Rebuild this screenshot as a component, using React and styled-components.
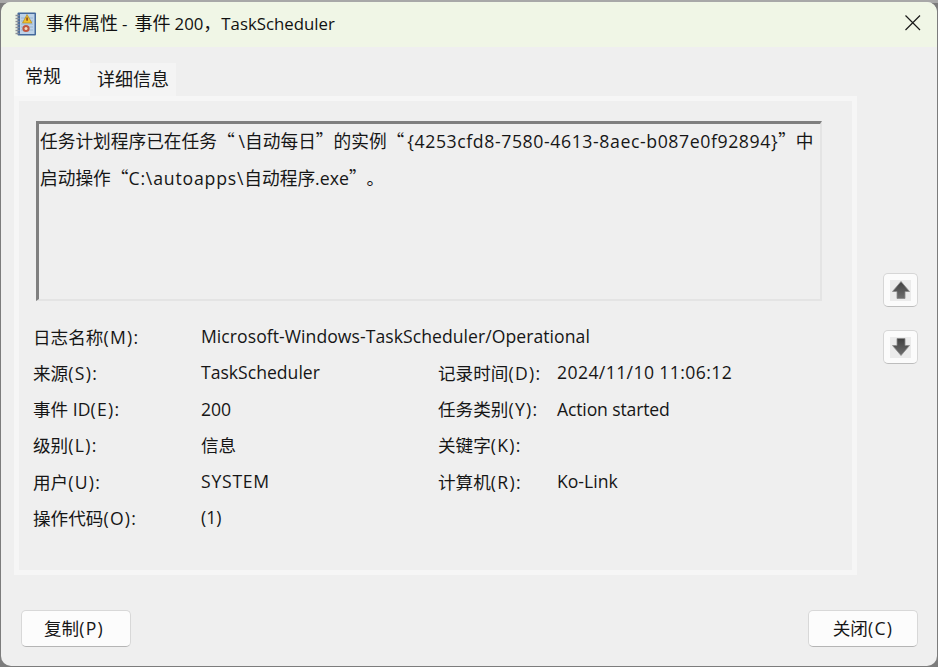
import React from "react";
import styled, { createGlobalStyle } from "styled-components";

const GlobalStyle = createGlobalStyle`
    html, body {
        margin: 0;
        padding: 0;
        width: 938px;
        height: 667px;
        overflow: hidden;
        background: #7c7c7c;
    }
    * {
        box-sizing: border-box;
    }
`;

const fields = [
    { label: "日志名称", hotkey: "(M):", value: "Microsoft-Windows-TaskScheduler/Operational", wide: true, track: "0.05px" },
    { label: "来源", hotkey: "(S):", value: "TaskScheduler", label2: "记录时间", hotkey2: "(D):", value2: "2024/11/10 11:06:12", track2: "0.4px" },
    { label: "事件 ID", hotkey: "(E):", value: "200", label2: "任务类别", hotkey2: "(Y):", value2: "Action started", track2: "-0.15px" },
    { label: "级别", hotkey: "(L):", value: "信息", label2: "关键字", hotkey2: "(K):", value2: "" },
    { label: "用户", hotkey: "(U):", value: "SYSTEM", track: "0.75px", label2: "计算机", hotkey2: "(R):", value2: "Ko-Link" },
    { label: "操作代码", hotkey: "(O):", value: "(1)" },
];

function NotebookIcon() {
    return (
        <svg width="24" height="26" viewBox="0 0 24 26">
            <rect x="3.5" y="1.5" width="18.5" height="23" rx="1" fill="#44699c" />
            <rect x="6" y="3" width="14.5" height="20" fill="#bcd2e8" />
            <path d="M7 7h12M7 10h12M7 13h12M7 16h12M7 19h12" stroke="#8fadcc" strokeWidth="0.8" />
            <path d="M13 3.5 L18 12 H8.5 Z" fill="#efc12f" stroke="#a9801a" strokeWidth="0.6" />
            <rect x="12.4" y="6.5" width="1.3" height="3.2" fill="#7a2c10" />
            <circle cx="12" cy="17.5" r="3.6" fill="#c0563f" />
            <circle cx="12" cy="17.5" r="1.5" fill="#efdcc4" />
            <path d="M1.5 4.5h4M1.5 7.5h4M1.5 10.5h4M1.5 13.5h4M1.5 16.5h4M1.5 19.5h4M1.5 22.5h4" stroke="#8a8f98" strokeWidth="1.3" />
        </svg>
    );
}

function CloseIcon() {
    return (
        <svg width="16" height="16" viewBox="0 0 16 16">
            <path d="M0.5 0.5 L15 15 M15 0.5 L0.5 15" stroke="#1a1a1a" strokeWidth="1.2" fill="none" />
        </svg>
    );
}

function ArrowIcon({ down }) {
    return (
        <ArrowBack>
            <svg width="20" height="20" viewBox="0 0 20 20">
                <defs>
                    <linearGradient id={down ? "arrowDown" : "arrowUp"} x1="0" y1="0" x2="0" y2="1">
                        <stop offset="0" stopColor="#3f3f3f" />
                        <stop offset="1" stopColor="#6f6f6f" />
                    </linearGradient>
                </defs>
                <path
                    d={down ? "M6 1.5h8v7h4.5L10 18.5 1.5 8.5H6z" : "M10 1.5l8.5 10H14v7H6v-7H1.5z"}
                    fill={`url(#${down ? "arrowDown" : "arrowUp"})`}
                    stroke="#8a8a8a"
                    strokeWidth="0.8"
                />
            </svg>
        </ArrowBack>
    );
}

function App() {
    return (
        <Desktop>
            <GlobalStyle />
            <Window lang="zh-CN">
                <TitleBar>
                    <NotebookIcon />
                    <TitleText>
                        事件属性 <TitleDash>-</TitleDash> 事件 <TitleLatin>200</TitleLatin>，<TitleLatin>TaskScheduler</TitleLatin>
                    </TitleText>
                    <CloseButton>
                        <CloseIcon />
                    </CloseButton>
                </TitleBar>
                <Body>
                    <Main>
                        <TabColumn>
                            <Tabs>
                                <Tab $active>常规</Tab>
                                <Tab>详细信息</Tab>
                            </Tabs>
                            <Panel>
                                <Description>
                                    <DescriptionText>
                                        任务计划程序已在任务“<Backslash>\</Backslash>自动每日”的实例“
                                        <Guid>&#123;4253cfd8-7580-4613-8aec-b087e0f92894&#125;</Guid>”中
                                        <br />
                                        启动操作“<Latin $track="0.8px">C:\autoapps\</Latin>自动程序<Latin>.exe</Latin>”。
                                    </DescriptionText>
                                </Description>
                                <FieldGrid>
                                    {fields.map((item) => (
                                        <React.Fragment key={item.label}>
                                            <Label>
                                                {item.label}
                                                <Hotkey>{item.hotkey}</Hotkey>
                                            </Label>
                                            <Value $wide={item.wide} $track={item.track}>{item.value}</Value>
                                            {!item.wide && (
                                                <Label>
                                                    {item.label2}
                                                    <Hotkey>{item.hotkey2}</Hotkey>
                                                </Label>
                                            )}
                                            {!item.wide && <Value $track={item.track2}>{item.value2}</Value>}
                                        </React.Fragment>
                                    ))}
                                </FieldGrid>
                            </Panel>
                        </TabColumn>
                        <SideButtons>
                            <ArrowButton>
                                <ArrowIcon />
                            </ArrowButton>
                            <ArrowButton>
                                <ArrowIcon down />
                            </ArrowButton>
                        </SideButtons>
                    </Main>
                    <Footer>
                        <ActionButton $pad="22px">复制<Hotkey>(P)</Hotkey></ActionButton>
                        <ActionButton>关闭<Hotkey>(C)</Hotkey></ActionButton>
                    </Footer>
                </Body>
            </Window>
        </Desktop>
    );
}

export default App;

const Desktop = styled.div`
    width: 938px;
    height: 667px;
    padding: 2px 1px 1px 1px;
    background: linear-gradient(#a8a8a8 0 3px, #7c7c7c 3px);
    font-family: "Open Sans", "Noto Sans CJK SC", sans-serif;
    color: #161616;
`;

const Window = styled.div`
    width: 100%;
    height: 100%;
    border-radius: 10px;
    overflow: hidden;
    background: #efefef;
    display: flex;
    flex-direction: column;
`;

const TitleBar = styled.div`
    height: 45px;
    flex: none;
    background: #f0f6e6;
    display: flex;
    align-items: center;
    padding: 0 16px 2px 13px;
`;

const TitleText = styled.div`
    margin-left: 8px;
    margin-top: -4px;
    font-family: "Noto Sans CJK SC", sans-serif;
    font-size: 18px;
    color: #111;
    flex: 1;
`;

const TitleLatin = styled.span`
    font-family: "Open Sans", sans-serif;
    font-size: 16.8px;
`;

const TitleDash = styled(TitleLatin)`
    letter-spacing: 3px;
`;

const CloseButton = styled.div`
    display: flex;
    margin-top: -2px;
`;

const Body = styled.div`
    flex: 1;
    display: flex;
    flex-direction: column;
    padding: 13px 19px 0 13px;
`;

const Main = styled.div`
    display: flex;
`;

const TabColumn = styled.div`
    width: 843px;
    flex: none;
`;

const Tabs = styled.div`
    display: flex;
    align-items: flex-end;
    height: 36px;
`;

const Tab = styled.div`
    height: ${(p) => (p.$active ? "36px" : "33px")};
    width: ${(p) => (p.$active ? "76px" : "86px")};
    background: ${(p) => (p.$active ? "#f9f9f9" : "#f4f4f4")};
    font-size: 18px;
    line-height: ${(p) => (p.$active ? "32px" : "33px")};
    padding-left: ${(p) => (p.$active ? "11px" : "7px")};
`;

const Panel = styled.div`
    height: 479px;
    border: 5px solid #f6f6f6;
    background: #efefef;
    padding: 20px 0 0 17px;
`;

const Description = styled.div`
    width: 786px;
    height: 180px;
    border-style: solid;
    border-width: 3px 2px 2px 3px;
    border-color: #7f7f7f #e4e4e4 #e4e4e4 #7f7f7f;
    padding: 0 0 0 1px;
`;

const DescriptionText = styled.div`
    margin-top: -2px;
    font-family: "Noto Sans CJK SC", sans-serif;
    font-size: 17.7px;
    line-height: 36px;
    white-space: nowrap;
    text-spacing-trim: space-all;
`;

const Latin = styled.span`
    font-family: "Open Sans", sans-serif;
    letter-spacing: ${(p) => p.$track || "0"};
`;

const Backslash = styled(Latin)`
    margin-left: 4px;
`;

const Guid = styled(Latin)`
    letter-spacing: 0.58px;
    margin-left: 3px;
`;

const FieldGrid = styled.div`
    display: grid;
    grid-template-columns: 168px 237px 119px 1fr;
    grid-auto-rows: 36.25px;
    align-items: center;
    margin: 17px 0 0 -3px;
    font-size: 17.6px;
`;

const Label = styled.div`
    white-space: nowrap;
`;

const Hotkey = styled.span`
    letter-spacing: 1.3px;
`;

const Value = styled.div`
    white-space: nowrap;
    grid-column: ${(p) => (p.$wide ? "2 / 5" : "auto")};
    letter-spacing: ${(p) => p.$track || "0"};
`;

const SideButtons = styled.div`
    display: flex;
    flex-direction: column;
    gap: 23px;
    margin: 213px 0 0 26px;
`;

const ArrowButton = styled.div`
    width: 35px;
    height: 34px;
    background: #fbfbfb;
    border: 1px solid #d6d6d6;
    border-bottom-color: #bdbdbd;
    border-radius: 5px;
    display: flex;
    align-items: center;
    justify-content: center;
`;

const ArrowBack = styled.div`
    width: 21px;
    height: 21px;
    background: #ebebeb;
    display: flex;
    align-items: center;
    justify-content: center;
`;

const Footer = styled.div`
    display: flex;
    justify-content: space-between;
    padding: 35px 0 0 7px;
`;

const ActionButton = styled.div`
    width: 110px;
    height: 37px;
    background: #fcfcfc;
    border: 1px solid #d8d8d8;
    border-bottom-color: #b5b5b5;
    border-radius: 5px;
    font-size: 17.6px;
    padding-bottom: 2px;
    display: flex;
    align-items: center;
    justify-content: ${(p) => (p.$pad ? "flex-start" : "center")};
    padding-left: ${(p) => p.$pad || "0"};
`;
